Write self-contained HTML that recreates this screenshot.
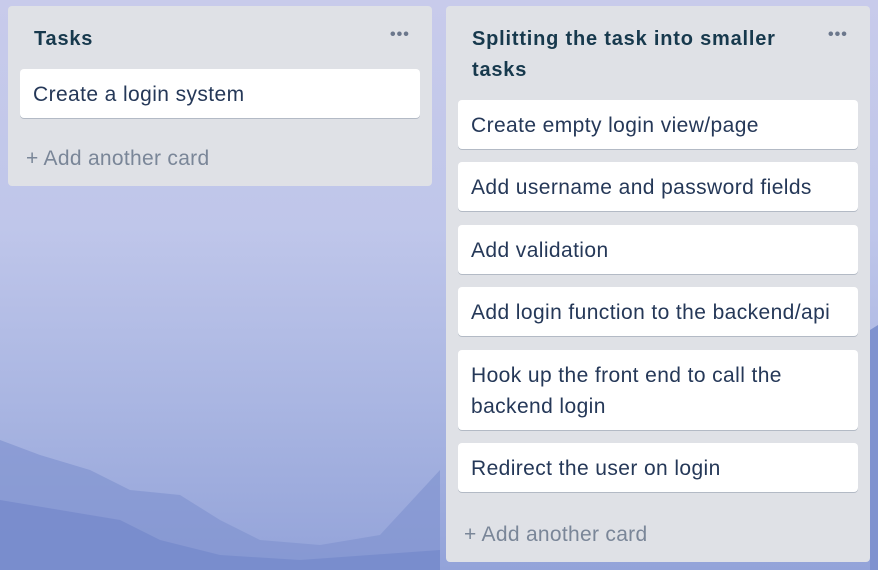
<!DOCTYPE html>
<html><head><style>
html,body{margin:0;padding:0;width:878px;height:570px;overflow:hidden}
body{position:relative;font-family:"Liberation Sans",Arial,sans-serif;background:linear-gradient(180deg,#c8cbeb 0%,#bfc6ea 40%,#aab6e2 70%,#93a3d9 100%)}
svg.bg{position:absolute;left:0;top:0}
.list{position:absolute;background:#dfe1e6;border-radius:4px}
.title{position:absolute;font-weight:bold;font-size:20px;letter-spacing:0.8px;color:#17394d;line-height:31px}
.dots{position:absolute;color:#6b778c;font-size:16px;letter-spacing:1px;font-weight:bold}
.card{position:absolute;left:12px;width:400px;background:#fff;border-radius:4px;box-shadow:0 1px 0 #b3bac5;font-size:21px;letter-spacing:0.4px;color:#253858;line-height:31px;padding:10px 13px;box-sizing:border-box}
.add{position:absolute;font-size:21px;letter-spacing:0.3px;color:#7a8698}
</style></head><body>
<svg class="bg" width="878" height="570">
<path d="M0 440 L40 455 L90 470 L130 490 L180 495 L220 520 L260 540 L320 545 L380 535 L440 470 L440 570 L0 570Z" fill="#8194d0" opacity="0.7"/>
<path d="M0 500 L60 510 L120 520 L160 540 L220 555 L300 560 L440 550 L440 570 L0 570Z" fill="#7488cb" opacity="0.7"/>
<path d="M870 330 L878 325 L878 570 L870 570Z" fill="#7f92cf"/>
</svg>
<div class="list" style="left:8px;top:6px;width:424px;height:180px">
 <div class="title" style="left:26px;top:18px">Tasks</div>
 <div class="dots" style="left:382px;top:20px">•••</div>
 <div class="card" style="top:63px;height:49px">Create a login system</div>
 <div class="add" style="left:18px;top:141px">+ Add another card</div>
</div>
<div class="list" style="left:446px;top:6px;width:424px;height:556px">
 <div class="title" style="left:26px;top:18px">Splitting the task into smaller<br>tasks</div>
 <div class="dots" style="left:382px;top:20px">•••</div>
 <div class="card" style="top:94px;height:49px">Create empty login view/page</div>
 <div class="card" style="top:156px;height:49px">Add username and password fields</div>
 <div class="card" style="top:219px;height:49px">Add validation</div>
 <div class="card" style="top:281px;height:49px">Add login function to the backend/api</div>
 <div class="card" style="top:344px;height:80px">Hook up the front end to call the<br>backend login</div>
 <div class="card" style="top:437px;height:49px">Redirect the user on login</div>
 <div class="add" style="left:18px;top:517px">+ Add another card</div>
</div>
</body></html>
